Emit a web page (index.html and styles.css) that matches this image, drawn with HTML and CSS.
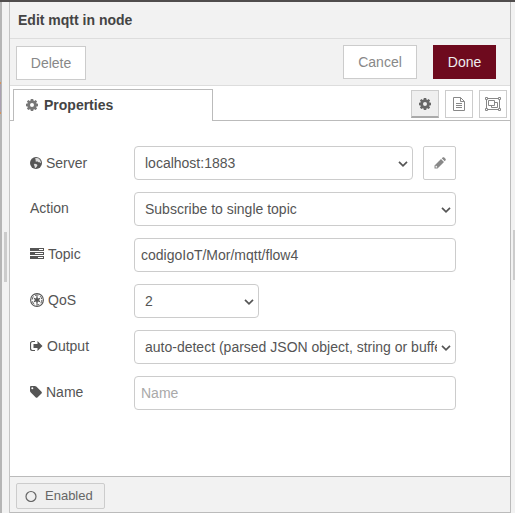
FILE: index.html
```
<!DOCTYPE html>
<html lang="en">
<head>
<meta charset="utf-8">
<title>Edit mqtt in node</title>
<link rel="stylesheet" href="styles.css">
</head>
<body>
<svg class="defs" aria-hidden="true">
  <symbol id="cog" viewBox="0 0 12 12"><path fill-rule="evenodd" d="M4.800 0h2.400l.3 1.500.8.400 1.300-.9 1.500 1.500-.9 1.300.3.800L12 4.800v2.400l-1.500.3-.3.800.9 1.300-1.500 1.500-1.300-.9-.8.300L7.200 12H4.800l-.3-1.500-.8-.3-1.300.9L.9 9.600l.9-1.300-.3-.8L0 7.200V4.800l1.500-.3.3-.7L.9 2.500 2.400 1l1.300.9.800-.4zM6 4a2 2 0 1 0 0 4 2 2 0 0 0 0-4z"/></symbol>
  <symbol id="chevron" viewBox="0 0 10 6"><path class="line" stroke-width="1.700" d="M1 .8l4 4 4-4"/></symbol>
</svg>
<div class="window">
  <div class="canvas-edge"><i></i></div>
  <div class="separator"><i></i></div>
  <main class="tray">
    <header class="title">Edit mqtt in node</header>
    <div class="toolbar">
      <button class="btn delete">Delete</button>
      <button class="btn cancel">Cancel</button>
      <button class="btn done">Done</button>
    </div>
    <nav class="tabs">
      <div class="tab"><svg width="12" height="12"><use href="#cog"/></svg>Properties</div>
      <div class="tab-icons">
        <button class="icon-btn active"><svg width="12" height="12"><use href="#cog"/></svg></button>
        <button class="icon-btn"><svg width="12" height="14" viewBox="0 0 12 14"><path class="line" d="M.5.5h7l4 4v9H.5zM7.500.5v4h4M3 6.500h6M3 8.500h6M3 10.500h6"/></svg></button>
        <button class="icon-btn"><svg width="16" height="14" viewBox="0 0 16 14"><path class="line" d="M2 1.500h12M2 12.500h12M1.500 2v10M14.500 2v10M3.500 3.500h6v5h-6zM9.500 5.500h3v5h-6v-2"/><path class="handles" d="M.5.5h2v2h-2zM13.500.5h2v2h-2zM.5 11.500h2v2h-2zM13.500 11.500h2v2h-2z"/></svg></button>
      </div>
    </nav>
    <form class="form">
      <div class="row first">
        <label><svg width="12" height="12" viewBox="0 0 12 12"><circle cx="6" cy="6" r="6"/><path class="land" d="M5.200 1.200 7 .9l1.700.7 1.500 1.600.8 2.300-.9.800-.7-1.300-1.200.3-.9-1-1.300.5-.7-1 1-.9-1.200-.7zM4.600 6.800l1.600.3 1.300 1-.6 1.300-1.300 1.500-.8-.2-.2-1.700-.8-1.200z"/></svg>Server</label>
        <div class="select short"><select><option>localhost:1883</option></select><svg class="arrow" width="10" height="6"><use href="#chevron"/></svg></div>
        <button type="button" class="edit"><svg width="12" height="12" viewBox="0 0 12 12"><path fill-rule="evenodd" d="M.5 8.500 7 2l3 3-6.500 6.500H.5zM1.600 9v1.400H3l.4-.4L2 8.600zM7.700 1.300 9 .2l1 .1 1.700 1.700.1.900-1.100 1.300z"/></svg></button>
      </div>
      <div class="row">
        <label>Action</label>
        <div class="select"><select><option>Subscribe to single topic</option></select><svg class="arrow" width="10" height="6"><use href="#chevron"/></svg></div>
      </div>
      <div class="row">
        <label><svg width="14" height="12" viewBox="0 0 14 12"><path fill-rule="evenodd" d="M0 0h14v3H0zM9 1v1h4V1zM0 4h14v3H0zM5 5v1h8V5zM0 8h14v3H0zM8 9v1h5V9z"/></svg>Topic</label>
        <input type="text" value="codigoIoT/Mor/mqtt/flow4">
      </div>
      <div class="row">
        <label><svg width="14" height="14" viewBox="0 0 14 14"><circle class="line" cx="7" cy="7" r="6.400" stroke-width="1.100"/><circle class="line" cx="7" cy="7" r="4.900" stroke-width="1" stroke-dasharray="3.400 1.730"/><path class="line" d="M7 3.300v7.400M4 5.300l6 3.400M10 5.300 4 8.700" stroke-width="1.400"/><circle cx="7" cy="7" r="1.800"/></svg>QoS</label>
        <div class="select tiny"><select><option>2</option></select><svg class="arrow" width="10" height="6"><use href="#chevron"/></svg></div>
      </div>
      <div class="row">
        <label><svg width="13" height="12" viewBox="0 0 13 12"><path class="line" stroke-width="1.200" d="M5 1.500H2.500a2 2 0 0 0-2 2v5a2 2 0 0 0 2 2H5"/><path d="M3.500 4h4V1l5 5-5 5V8h-4z"/></svg>Output</label>
        <div class="select"><select><option>auto-detect (parsed JSON object, string or buffer)</option></select><svg class="arrow" width="10" height="6"><use href="#chevron"/></svg></div>
      </div>
      <div class="row">
        <label><svg width="12" height="12" viewBox="0 0 12 12"><path fill-rule="evenodd" d="M0 1Q0 0 1 0h3.800Q5.600 0 6.300.6l5.200 5.200q.8.8 0 1.600L7.400 11.500q-.8.7-1.600 0L.6 6.300Q0 5.600 0 4.800zM2.300 1.300a1 1 0 1 0 0 2 1 1 0 0 0 0-2z"/></svg>Name</label>
        <input type="text" placeholder="Name">
      </div>
    </form>
    <footer class="footer">
      <button class="enabled"><svg width="12" height="12" viewBox="0 0 12 12"><circle class="line" cx="6" cy="6.500" r="5" stroke-width="1.200"/></svg>Enabled</button>
    </footer>
  </main>
  <div class="sidebar-edge"><i></i></div>
</div>
</body>
</html>
```

FILE: styles.css
```
* { box-sizing: border-box; }
body {
  margin: 0;
  font: 14px/20px "Liberation Sans", Arial, sans-serif;
  color: #555;
  background: #f2f2f2;
}
svg { display: block; flex: none; fill: currentColor; }
.line { fill: none; stroke: currentColor; }
.defs { position: absolute; width: 0; height: 0; }
button, select, input { font: inherit; color: inherit; margin: 0; }
.window { display: flex; height: 513px; border-top: 2px solid #504d4d; overflow: hidden; }
.canvas-edge { width: 2px; background: #b5b5b5; padding-top: 80px; }
.canvas-edge i { display: block; width: 1px; height: 32px; background: #aaa1b1; border: solid #d5935d; border-width: 2px 0; }
.separator { width: 8px; border-right: 1px solid #c4c4c4; padding: 230px 0 0 2px; }
.separator i { display: block; width: 3px; height: 50px; background: #ccc; }
.tray { width: 501px; display: flex; flex-direction: column; border-right: 1px solid #bbb; border-bottom: 1px solid #bbb; background: #fff; }
.title { height: 37px; padding: 8px; border-bottom: 1px solid #ddd; background: #f2f2f2; font-weight: bold; color: #444; }
.toolbar { height: 47px; display: flex; align-items: flex-start; padding: 6px 14px 0 6px; border-bottom: 1px solid #ddd; background: #f2f2f2; }
.btn { height: 34px; padding: 0; border: 1px solid #ccc; background: #fff; color: #888; }
.delete { width: 70px; margin: 1px auto 0 0; }
.cancel { width: 74px; }
.done { width: 63px; margin-left: 16px; border-color: #6e0a1e; background: #6e0a1e; color: #eee; }
.tabs { height: 35px; display: flex; justify-content: space-between; border-bottom: 1px solid #bbb; padding: 3px 3px 0; }
.tab { width: 200px; height: 32px; display: flex; align-items: center; gap: 6px; padding: 0 0 1px 12px; border: 1px solid #bbb; border-bottom: 0; background: #fff; font-weight: bold; color: #444; }
.tab svg { color: #777; }
.tab-icons { display: flex; gap: 6px; padding-top: 1px; }
.icon-btn { width: 28px; height: 28px; display: flex; align-items: center; justify-content: center; padding: 0; border: 1px solid #ccc; background: #fff; color: #888; }
.icon-btn.active { background: #efefef; border-bottom: 2px solid #aaa; color: #666; }
.handles { fill: #fff; stroke: currentColor; }
.form { flex: 1; display: flex; flex-direction: column; gap: 12px; padding: 25px 20px 0; }
.row { display: flex; height: 34px; }
.row label { width: 104px; height: 34px; display: flex; align-items: center; gap: 4px; padding-bottom: 2px; }
.row.first label { padding-bottom: 0; }
.land { fill: #ddd; }
.select { position: relative; width: 322px; height: 34px; }
select, input { width: 322px; height: 34px; padding: 4px 6px; border: 1px solid #ccc; border-radius: 4px; background: #fff; outline: 0; }
select { appearance: none; display: block; width: 100%; padding: 4px 18px 4px 10px; }
.arrow { position: absolute; right: 5px; top: 15px; pointer-events: none; }
.short { width: 279px; }
.tiny { width: 125px; }
input::placeholder { color: #a9a9a9; }
.edit { width: 33px; height: 34px; margin-left: 10px; padding: 0; display: flex; align-items: center; justify-content: center; border: 1px solid #ccc; border-radius: 2px; background: #fff; color: #888; }
.footer { height: 36px; padding: 6px; border-top: 1px solid #bbb; background: #f2f2f2; }
.enabled { width: 89px; height: 26px; display: flex; align-items: center; gap: 8px; padding: 0 0 0 8px; border: 1px solid #ccc; border-radius: 2px; background: #efefef; color: #666; font-size: 13px; }
.sidebar-edge { flex: 1; padding: 228px 0 0 2px; }
.sidebar-edge i { display: block; height: 50px; background: #ccc; }
```
